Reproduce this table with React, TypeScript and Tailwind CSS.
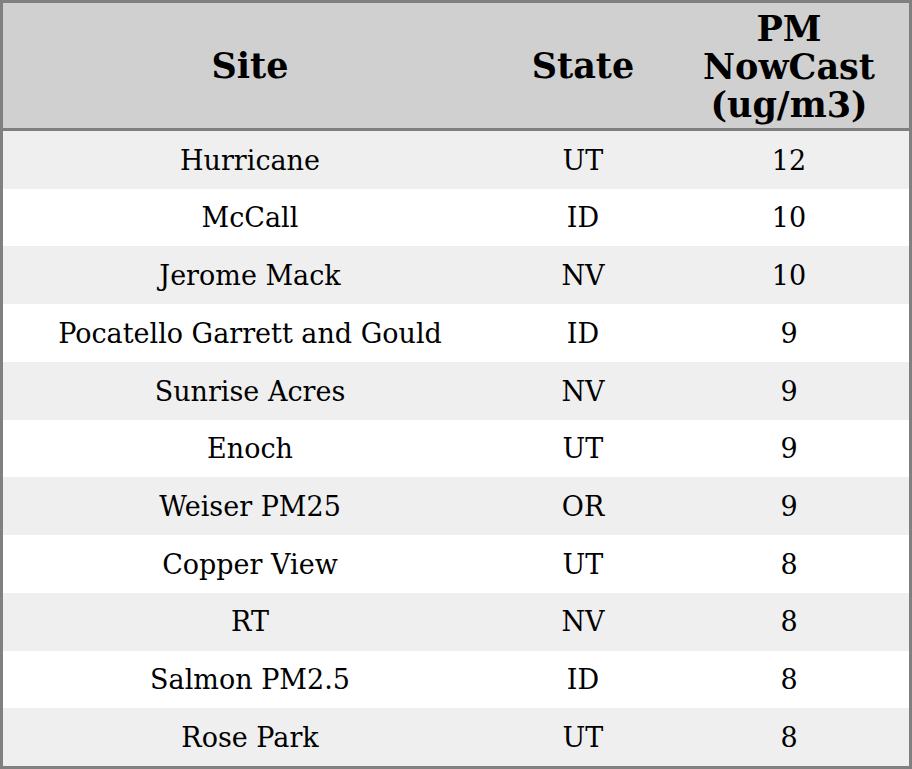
const rows: [string, string, string][] = [
  ['Hurricane', 'UT', '12'],
  ['McCall', 'ID', '10'],
  ['Jerome Mack', 'NV', '10'],
  ['Pocatello Garrett and Gould', 'ID', '9'],
  ['Sunrise Acres', 'NV', '9'],
  ['Enoch', 'UT', '9'],
  ['Weiser PM25', 'OR', '9'],
  ['Copper View', 'UT', '8'],
  ['RT', 'NV', '8'],
  ['Salmon PM2.5', 'ID', '8'],
  ['Rose Park', 'UT', '8'],
]

export default function App() {
  return (
    <div className="w-[912px] h-[769px] bg-white font-['DejaVu_Serif',serif] text-black">
      <div className="border-[3px] border-[#808080] h-full flex flex-col">
        <div className="flex h-[128px] shrink-0 bg-[#d0d0d0] border-b-[3px] border-[#808080] font-bold text-[35px] leading-[38px] text-center">
          <div className="w-[494px] flex items-center justify-center">Site</div>
          <div className="w-[172px] flex items-center justify-center">State</div>
          <div className="flex-1 flex items-center justify-center pt-[3px]">
            PM
            <br />
            NowCast
            <br />
            (ug/m3)
          </div>
        </div>
        <div className="flex-1 flex flex-col text-[27px]">
          {rows.map(([site, state, pm], i) => (
            <div
              key={site}
              className={`flex flex-1 items-center text-center pt-[2px] ${i % 2 === 0 ? 'bg-[#efefef]' : 'bg-white'}`}
            >
              <div className="w-[494px]">{site}</div>
              <div className="w-[172px]">{state}</div>
              <div className="flex-1">{pm}</div>
            </div>
          ))}
        </div>
      </div>
    </div>
  )
}
